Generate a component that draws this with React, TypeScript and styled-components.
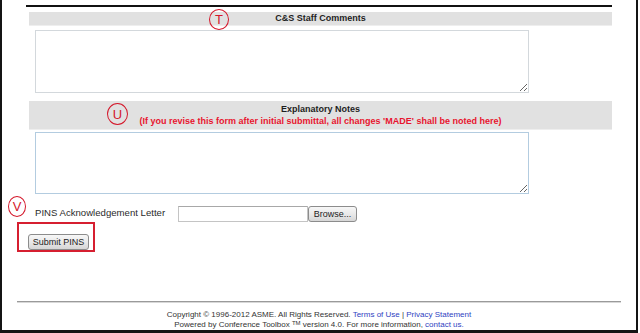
import React from 'react';
import styled, {createGlobalStyle} from "styled-components";

const GlobalStyle = createGlobalStyle`
  html, body {
    margin: 0;
    padding: 0;
    background: #ffffff;
  }
  body {
    font-family: "Liberation Sans", Arial, sans-serif;
    color: #222222;
  }
`;

const Frame = styled.div`
  position: relative;
  width: 638px;
  height: 333px;
  box-sizing: border-box;
  border-left: 2px solid #141414;
  border-right: 2px solid #141414;
  border-bottom: 3px solid #141414;
  display: flex;
  flex-direction: column;
`;

const Main = styled.div`
  margin: 5px 0 0 24px;
  width: 586px;
  display: flex;
  flex-direction: column;
`;

const Rule = styled.div`
  height: 2px;
  background: #111111;
`;

const Bar = styled.div<{ $tall?: boolean; $top: number }>`
  position: relative;
  margin: ${p => p.$top}px 0 0 3px;
  height: ${p => (p.$tall ? 29 : 14)}px;
  background: #e1e1e1;
  border-bottom: 1px solid #eeeeee;
  box-sizing: border-box;
  display: flex;
  flex-direction: column;
  align-items: center;
  justify-content: center;
`;

const BarTitle = styled.div`
  font-size: 9px;
  font-weight: bold;
  line-height: 11px;
  color: #1e1e1e;
`;

const BarNote = styled.div`
  font-size: 9px;
  font-weight: bold;
  line-height: 12px;
  color: #e8142f;
`;

const Notes = styled.textarea<{ $focus?: boolean; $top: number; $h: number }>`
  display: block;
  margin: ${p => p.$top}px 0 0 9px;
  width: 494px;
  height: ${p => p.$h}px;
  box-sizing: border-box;
  border: 1px solid ${p => (p.$focus ? "#b3cce0" : "#d3d8dc")};
  background: #ffffff;
  resize: both;
  outline: none;
  font-family: inherit;
`;

const Marker = styled.div<{ $x: number; $y: number; $w: number; $h: number }>`
  position: absolute;
  left: ${p => p.$x}px;
  top: ${p => p.$y}px;
  width: ${p => p.$w}px;
  height: ${p => p.$h}px;
  box-sizing: border-box;
  border: 1.5px solid #d4182b;
  border-radius: 50%;
  display: flex;
  align-items: center;
  justify-content: center;
  color: #d4182b;
  font-size: 13px;
  font-weight: normal;
  line-height: 1;
`;

const PinsRow = styled.div`
  position: relative;
  margin: 12px 0 0 33px;
  display: flex;
  align-items: center;
  height: 16px;
`;

const PinsLabel = styled.span`
  width: 143px;
  font-size: 9.6px;
  color: #2b2b2b;
  margin-top: -4px;
`;

const FileBox = styled.input`
  width: 130px;
  height: 16px;
  box-sizing: border-box;
  border: 1px solid #c4c4c4;
  border-top-color: #a8a8a8;
  padding: 0;
  margin: 0;
`;

const GrayButton = styled.button<{ $w: number }>`
  width: ${p => p.$w}px;
  height: 16px;
  box-sizing: border-box;
  margin: 0;
  padding: 0;
  border: 1px solid #8c8c8c;
  border-radius: 3px;
  background: linear-gradient(#f7f7f7, #e9e9e9 50%, #d6d6d6);
  font-family: "Liberation Sans", Arial, sans-serif;
  font-size: 9px;
  color: #222222;
`;

const SubmitBox = styled.div`
  margin: 0 0 0 15px;
  width: 78px;
  height: 30px;
  box-sizing: border-box;
  border: 2px solid #d61f30;
  padding: 7px 0 0 9px;
`;

const Footer = styled.div`
  margin-top: auto;
  display: flex;
  flex-direction: column;
  align-items: center;
`;

const FooterRule = styled.div`
  align-self: stretch;
  margin: 0 15px 6px 15px;
  height: 1px;
  background: #9a9a9a;
  border-bottom: 1px solid #d8d8d8;
`;

const FooterLine = styled.div<{ $lh: number }>`
  font-size: 8px;
  line-height: ${p => p.$lh}px;
  color: #333333;
  white-space: nowrap;
`;

const Link = styled.span`
  color: #2f3fc2;
`;

const Tm = styled.span`
  font-size: 6px;
  line-height: 0;
  vertical-align: 2px;
`;

export default function App() {
    return <>
        <GlobalStyle/>
        <Frame>
            <Main>
                <Rule/>
                <Bar $top={5}>
                    <BarTitle>C&amp;S Staff Comments</BarTitle>
                    <Marker $x={180} $y={-3} $w={20} $h={21}>T</Marker>
                </Bar>
                <Notes $top={4} $h={63}/>
                <Bar $top={8} $tall>
                    <BarTitle>Explanatory Notes</BarTitle>
                    <BarNote>(If you revise this form after initial submittal, all changes 'MADE' shall be noted here)</BarNote>
                    <Marker $x={78} $y={2} $w={21} $h={22}>U</Marker>
                </Bar>
                <Notes $top={2} $h={62} $focus/>
            </Main>
            <PinsRow>
                <Marker $x={-27} $y={-10} $w={18} $h={21}>V</Marker>
                <PinsLabel>PINS Acknowledgement Letter</PinsLabel>
                <FileBox type="text"/>
                <GrayButton $w={49}>Browse...</GrayButton>
            </PinsRow>
            <SubmitBox>
                <GrayButton $w={61}>Submit PINS</GrayButton>
            </SubmitBox>
            <Footer>
                <FooterRule/>
                <FooterLine $lh={11}>
                    Copyright © 1996-2012 ASME. All Rights Reserved. <Link>Terms of Use</Link> | <Link>Privacy Statement</Link>
                </FooterLine>
                <FooterLine $lh={10}>
                    Powered by Conference Toolbox <Tm>TM</Tm> version 4.0. For more information, <Link>contact us.</Link>
                </FooterLine>
            </Footer>
        </Frame>
    </>;
}
